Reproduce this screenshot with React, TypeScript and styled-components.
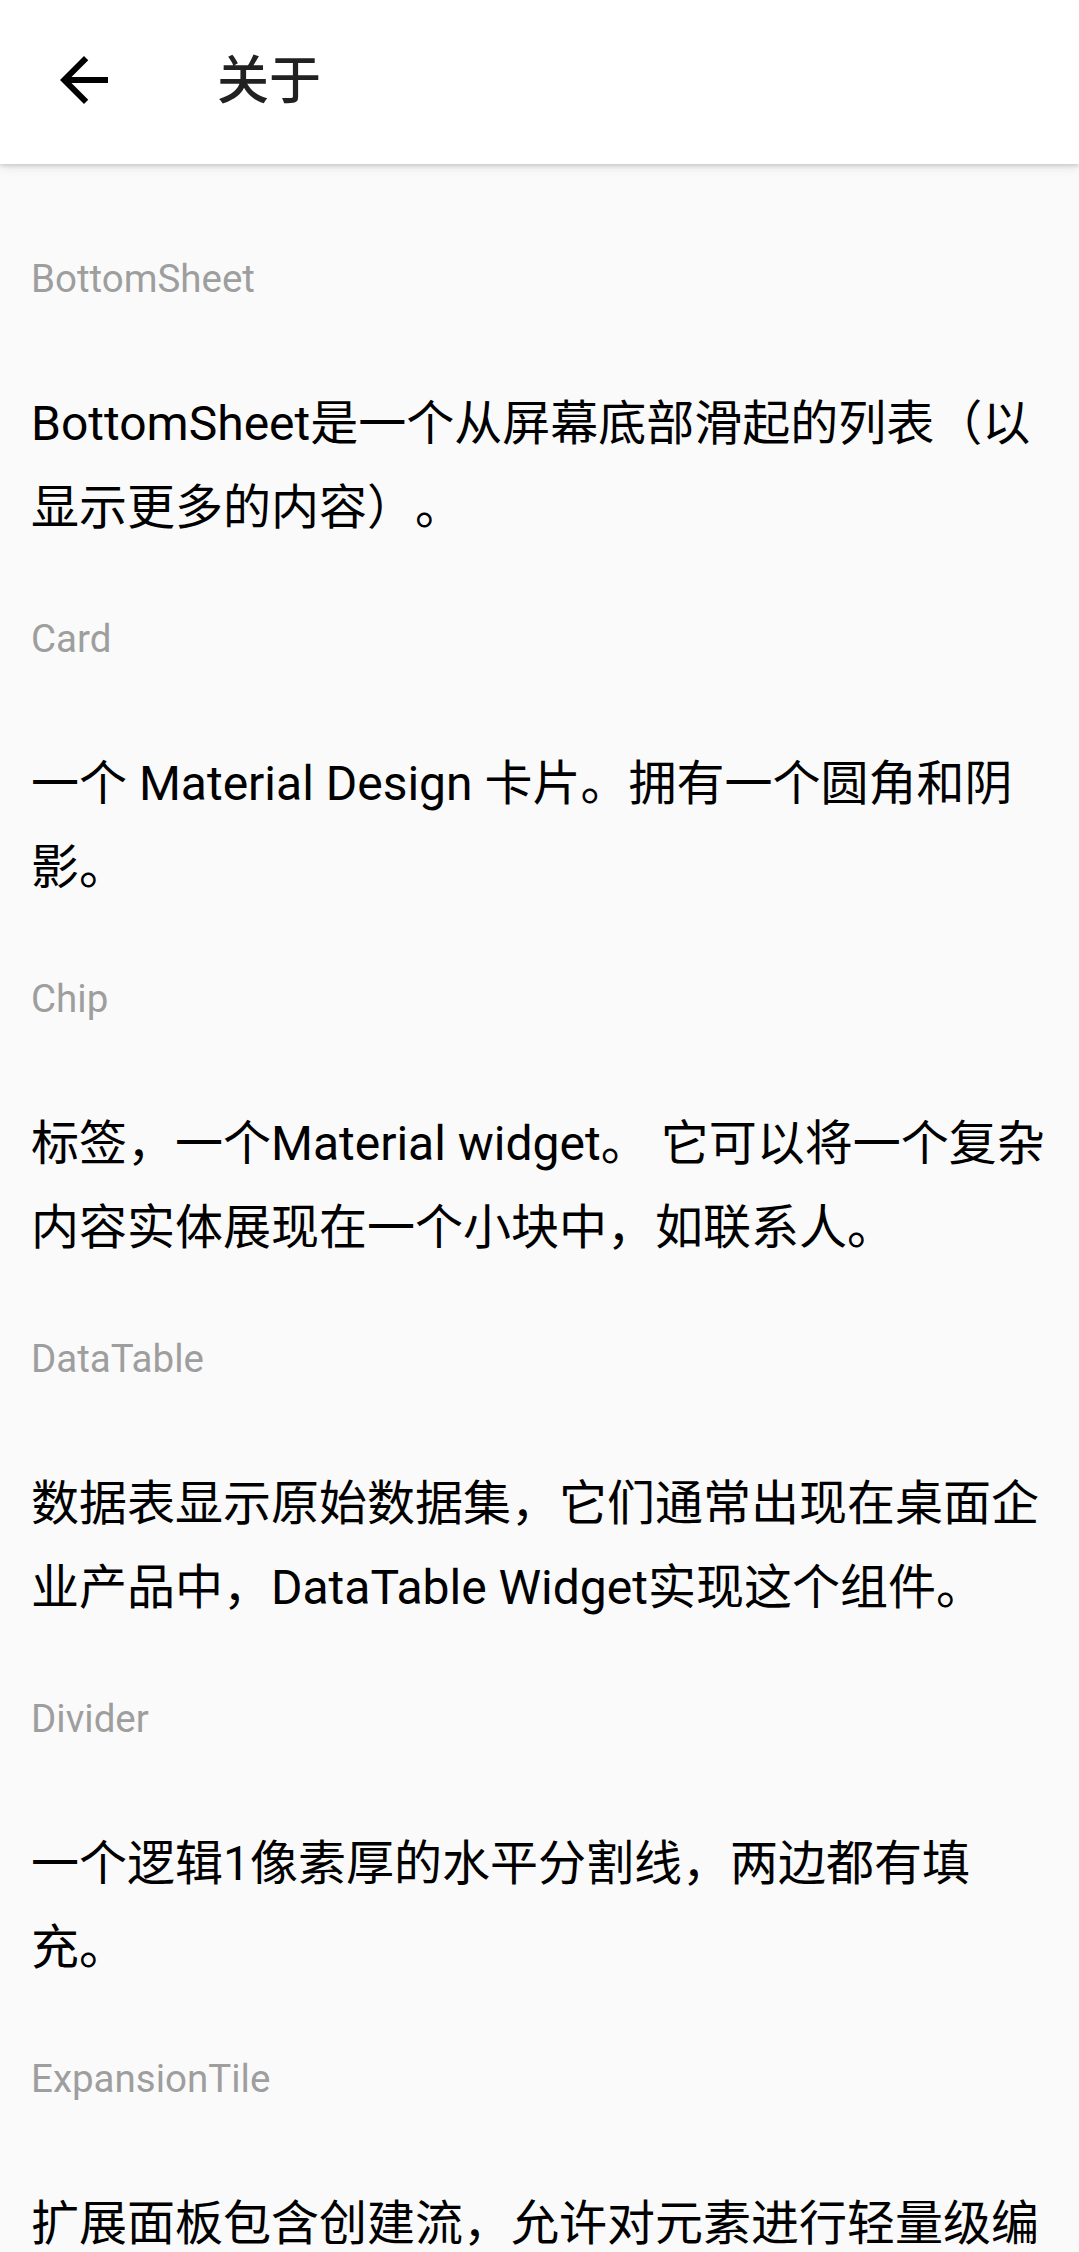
import React from "react";
import styled, { createGlobalStyle } from "styled-components";

const GlobalStyle = createGlobalStyle`
  html, body {
    margin: 0;
    padding: 0;
    background: #fafafa;
  }
  body {
    font-family: Roboto, "Noto Sans CJK SC", sans-serif;
    -webkit-font-smoothing: antialiased;
    text-spacing-trim: space-all;
  }
`;

const Page = styled.div`
  min-height: 2252px;
  background: #fafafa;
  display: flex;
  flex-direction: column;
`;

const AppBar = styled.header`
  height: 164px;
  background: #ffffff;
  box-shadow: 0 2px 4px rgba(0, 0, 0, 0.14), 0 4px 10px rgba(0, 0, 0, 0.08);
  display: flex;
  align-items: center;
  padding-left: 48px;
  position: relative;
  z-index: 1;
  flex-shrink: 0;
`;

const BackButton = styled.button`
  width: 72px;
  height: 72px;
  border: none;
  background: transparent;
  padding: 0;
  margin: -4px 0 0 0;
  display: flex;
  align-items: center;
  justify-content: center;
  color: #000;
`;

const Title = styled.h1`
  margin: 0 0 0 97px;
  font-family: Roboto, "Noto Sans CJK SC", sans-serif;
  font-size: 52px;
  font-weight: 500;
  color: #212121;
  line-height: 64px;
`;

const Content = styled.main`
  padding: 89px 31px 0 31px;
  display: flex;
  flex-direction: column;
`;

const Section = styled.section`
  display: flex;
  flex-direction: column;
  padding-bottom: 63px;
`;

const Label = styled.div`
  font-size: 38.5px;
  line-height: 52px;
  color: #9e9e9e;
  margin-bottom: 77px;
`;

const Body = styled.p`
  margin: 0;
  font-size: 48px;
  line-height: 84px;
  color: #000;
  text-spacing-trim: space-all;
`;

const ArrowBack = () => (
  <svg width="72" height="72" viewBox="0 0 24 24" aria-hidden="true">
    <path
      fill="currentColor"
      d="M20 11H7.83l5.59-5.59L12 4l-8 8 8 8 1.41-1.41L7.83 13H20v-2z"
    />
  </svg>
);

const items: { title: string; desc: string }[] = [
  { title: "BottomSheet", desc: "BottomSheet是一个从屏幕底部滑起的列表（以显示更多的内容）。" },
  { title: "Card", desc: "一个 Material Design 卡片。拥有一个圆角和阴影。" },
  { title: "Chip", desc: "标签，一个Material widget。 它可以将一个复杂内容实体展现在一个小块中，如联系人。" },
  { title: "DataTable", desc: "数据表显示原始数据集，它们通常出现在桌面企业产品中，DataTable Widget实现这个组件。" },
  { title: "Divider", desc: "一个逻辑1像素厚的水平分割线，两边都有填充。" },
  { title: "ExpansionTile", desc: "扩展面板包含创建流，允许对元素进行轻量级编辑。" },
];

export default function App() {
  return (
    <Page>
      <GlobalStyle />
      <AppBar>
        <BackButton aria-label="返回">
          <ArrowBack />
        </BackButton>
        <Title>关于</Title>
      </AppBar>
      <Content>
        {items.map((it) => (
          <Section key={it.title}>
            <Label>{it.title}</Label>
            <Body>{it.desc}</Body>
          </Section>
        ))}
      </Content>
    </Page>
  );
}
